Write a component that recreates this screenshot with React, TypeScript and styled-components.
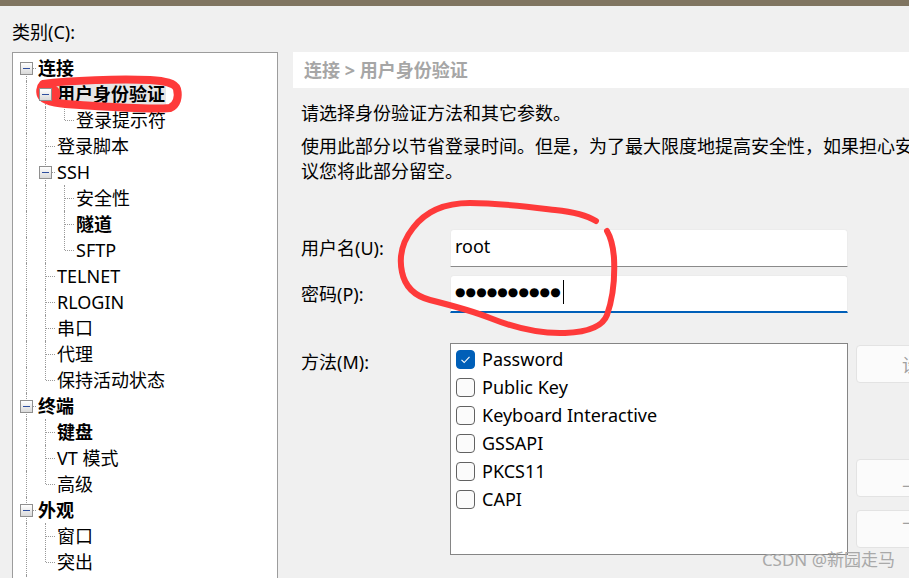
import React from 'react';
import styled, { createGlobalStyle } from 'styled-components';

const GlobalStyle = createGlobalStyle`
  html, body { margin: 0; padding: 0; background: #f0f0f0; overflow: hidden; }
  body { font-family: "Noto Sans", "Noto Sans CJK SC", sans-serif; }
`;

const Window = styled.div`
  position: relative;
  width: 909px;
  height: 578px;
  overflow: hidden;
  background: #f0f0f0;
  color: #000;
  font-family: "Noto Sans", "Noto Sans CJK SC", sans-serif;
  font-size: 18px;
`;

const TitleStrip = styled.div`
  height: 6px;
  background: #807561;
`;

const Body = styled.div`
  display: flex;
  align-items: flex-start;
  gap: 15px;
  padding: 13px 0 0 12px;
`;

const LeftPane = styled.div`
  width: 266px;
  flex: none;
  display: flex;
  flex-direction: column;
  gap: 7px;
`;

const CategoryLabel = styled.div`
  line-height: 26px;
  height: 26px;
`;

const TreeBox = styled.div`
  height: 560px;
  background: #fff;
  border: 1px solid #9c9c9c;
  padding: 2px 0 0 4px;
  display: flex;
  flex-direction: column;
`;

const TreeRow = styled.div`
  display: flex;
  align-items: stretch;
  height: 26px;
  flex: none;
`;

const GuideCell = styled.div<{ $line: boolean }>`
  position: relative;
  width: 19px;
  flex: none;
  &::before {
    content: "";
    display: ${p => (p.$line ? 'block' : 'none')};
    position: absolute;
    left: 9px;
    top: 0;
    bottom: 0;
    border-left: 1px dotted #9a9a9a;
  }
`;

const ConnectorCell = styled.div<{ $up: boolean; $down: boolean }>`
  position: relative;
  width: 19px;
  flex: none;
  &::before {
    content: "";
    position: absolute;
    left: 9px;
    top: ${p => (p.$up ? '0' : '13px')};
    bottom: ${p => (p.$down ? '0' : '13px')};
    border-left: 1px dotted #9a9a9a;
  }
  &::after {
    content: "";
    position: absolute;
    left: 10px;
    right: 0;
    top: 13px;
    border-top: 1px dotted #9a9a9a;
  }
`;

const Expander = styled.span`
  position: absolute;
  z-index: 1;
  left: 3px;
  top: 7px;
  width: 11px;
  height: 11px;
  border: 1px solid #8f8f8f;
  background: linear-gradient(#ffffff, #d9d9d9);
  display: flex;
  align-items: center;
  justify-content: center;
  &::after {
    content: "";
    width: 7px;
    height: 1px;
    background: #2f4f9e;
  }
`;

const NodeLabel = styled.span<{ $bold?: boolean; $selected?: boolean }>`
  margin-left: 1px;
  align-self: center;
  line-height: 22px;
  padding: 0 1px;
  white-space: nowrap;
  font-weight: ${p => (p.$bold ? 700 : 400)};
  background: ${p => (p.$selected ? '#e6e6e6' : 'transparent')};
`;

const RightPane = styled.div`
  width: 700px;
  flex: none;
  margin-top: 33px;
`;

const Breadcrumb = styled.div`
  height: 36px;
  line-height: 36px;
  background: #fff;
  padding-left: 11px;
  color: #a6a6a6;
  font-weight: 700;
  white-space: nowrap;
`;

const Content = styled.div`
  padding-left: 8px;
`;

const Para = styled.p<{ $gap: number }>`
  margin: ${p => p.$gap}px 0 0;
  line-height: 25px;
  white-space: nowrap;
`;

const Form = styled.div`
  margin-top: 45px;
  display: flex;
  flex-direction: column;
`;

const FormRow = styled.div<{ $gap: number; $align?: string }>`
  display: flex;
  align-items: ${p => p.$align || 'center'};
  margin-top: ${p => p.$gap}px;
`;

const FieldLabel = styled.div<{ $pad?: number }>`
  width: 149px;
  flex: none;
  line-height: 26px;
  padding-top: ${p => p.$pad || 0}px;
`;

const TextBox = styled.div<{ $focused?: boolean }>`
  width: 398px;
  height: 38px;
  box-sizing: border-box;
  background: #fff;
  border: 1px solid #ececec;
  border-bottom: ${p => (p.$focused ? '2px solid #005fb8' : '1px solid #8a8a8a')};
  border-radius: 4px 4px 0 0;
  padding: 0 0 4px 4px;
  display: flex;
  align-items: center;
  white-space: nowrap;
`;

const Dots = styled.span`
  font-family: "DejaVu Sans", sans-serif;
  font-size: 12px;
  letter-spacing: 0.1px;
`;

const Caret = styled.span`
  display: inline-block;
  width: 1px;
  height: 24px;
  background: #000;
  margin-left: 2px;
`;

const ListBox = styled.div`
  width: 398px;
  height: 212px;
  box-sizing: border-box;
  background: #fff;
  border: 1px solid #858585;
  padding: 1px 5px;
  display: flex;
  flex-direction: column;
`;

const CheckRow = styled.div`
  height: 28px;
  display: flex;
  align-items: center;
  gap: 7px;
`;

const CheckBox = styled.span<{ $checked?: boolean }>`
  width: 19px;
  height: 19px;
  box-sizing: border-box;
  border-radius: 4px;
  border: 1px solid ${p => (p.$checked ? '#005fb8' : '#626262')};
  background: ${p => (p.$checked ? '#005fb8' : '#fbfbfb')};
  display: flex;
  align-items: center;
  justify-content: center;
  flex: none;
`;

const ButtonColumn = styled.div`
  margin-left: 8px;
  padding-top: 2px;
  display: flex;
  flex-direction: column;
`;

const SideButton = styled.div<{ $gap: number }>`
  margin-top: ${p => p.$gap}px;
  width: 120px;
  height: 38px;
  box-sizing: border-box;
  border: 1px solid #e3e3e3;
  border-radius: 4px;
  background: #fbfbfb;
  color: #a0a0a0;
  padding-left: 45px;
  display: flex;
  align-items: center;
  white-space: nowrap;
`;

const Watermark = styled.div`
  position: absolute;
  right: 14px;
  top: 549px;
  font-size: 17px;
  line-height: 22px;
  color: #a9a9a9;
  white-space: nowrap;
`;

const Ink = styled.svg`
  position: absolute;
  left: 0;
  top: 0;
  pointer-events: none;
`;

type Node = { label: string; bold?: boolean; selected?: boolean; children?: Node[] };
type Row = {
  label: string;
  bold?: boolean;
  selected?: boolean;
  guides: boolean[];
  up: boolean;
  down: boolean;
  expander: boolean;
};

const tree: Node[] = [
  {
    label: '连接',
    bold: true,
    children: [
      { label: '用户身份验证', bold: true, selected: true, children: [{ label: '登录提示符' }] },
      { label: '登录脚本' },
      { label: 'SSH', children: [{ label: '安全性' }, { label: '隧道', bold: true }, { label: 'SFTP' }] },
      { label: 'TELNET' },
      { label: 'RLOGIN' },
      { label: '串口' },
      { label: '代理' },
      { label: '保持活动状态' },
    ],
  },
  { label: '终端', bold: true, children: [{ label: '键盘', bold: true }, { label: 'VT 模式' }, { label: '高级' }] },
  { label: '外观', bold: true, children: [{ label: '窗口' }, { label: '突出' }] },
  { label: '日志文件' },
  { label: '打印' },
];

function flatten(nodes: Node[], level: number, guides: boolean[], out: Row[]) {
  nodes.forEach((n, i) => {
    const isLast = i === nodes.length - 1;
    out.push({
      label: n.label,
      bold: n.bold,
      selected: n.selected,
      guides,
      up: !(level === 0 && i === 0),
      down: !isLast,
      expander: !!(n.children && n.children.length),
    });
    if (n.children) flatten(n.children, level + 1, [...guides, !isLast], out);
  });
}

const rows: Row[] = [];
flatten(tree, 0, [], rows);

const methods = [
  { label: 'Password', checked: true },
  { label: 'Public Key' },
  { label: 'Keyboard Interactive' },
  { label: 'GSSAPI' },
  { label: 'PKCS11' },
  { label: 'CAPI' },
];

export default function App() {
  return (
    <Window>
      <GlobalStyle />
      <TitleStrip />
      <Body>
        <LeftPane>
          <CategoryLabel>类别(C):</CategoryLabel>
          <TreeBox>
            {rows.map((r, idx) => (
              <TreeRow key={idx}>
                {r.guides.map((g, k) => (
                  <GuideCell key={k} $line={g} />
                ))}
                <ConnectorCell $up={r.up} $down={r.down}>
                  {r.expander && <Expander />}
                </ConnectorCell>
                <NodeLabel $bold={r.bold} $selected={r.selected}>
                  {r.label}
                </NodeLabel>
              </TreeRow>
            ))}
          </TreeBox>
        </LeftPane>
        <RightPane>
          <Breadcrumb>连接 &gt; 用户身份验证</Breadcrumb>
          <Content>
            <Para $gap={13}>请选择身份验证方法和其它参数。</Para>
            <Para $gap={8}>
              使用此部分以节省登录时间。但是，为了最大限度地提高安全性，如果担心安全问题，建
              <br />
              议您将此部分留空。
            </Para>
            <Form>
              <FormRow $gap={0}>
                <FieldLabel>用户名(U):</FieldLabel>
                <TextBox>root</TextBox>
              </FormRow>
              <FormRow $gap={8}>
                <FieldLabel>密码(P):</FieldLabel>
                <TextBox $focused>
                  <Dots>●●●●●●●●●●</Dots>
                  <Caret />
                </TextBox>
              </FormRow>
              <FormRow $gap={30} $align="flex-start">
                <FieldLabel $pad={6}>方法(M):</FieldLabel>
                <ListBox>
                  {methods.map(m => (
                    <CheckRow key={m.label}>
                      <CheckBox $checked={m.checked}>
                        {m.checked && (
                          <svg width="13" height="13" viewBox="0 0 13 13">
                            <polyline points="2.5,6.8 5.2,9.5 10.5,3.8" fill="none" stroke="#fff" strokeWidth="1.1" />
                          </svg>
                        )}
                      </CheckBox>
                      <span>{m.label}</span>
                    </CheckRow>
                  ))}
                </ListBox>
                <ButtonColumn>
                  <SideButton $gap={0}>设置(S)...</SideButton>
                  <SideButton $gap={76}>上移(U)</SideButton>
                  <SideButton $gap={13}>下移(D)</SideButton>
                </ButtonColumn>
              </FormRow>
            </Form>
          </Content>
        </RightPane>
      </Body>
      <Watermark>CSDN @新园走马</Watermark>
      <Ink width="909" height="578" viewBox="0 0 909 578">
        <g fill="none" stroke="#fe3a3a" strokeLinecap="round" strokeLinejoin="round">
          <path
            strokeWidth="8"
            d="M 43,84 C 70,80 120,79 150,80 C 165,81 175,83 177,89 C 179,97 177,105 170,108 C 150,110 110,107 80,105 C 60,104 46,102 42,97 C 39,93 40,87 43,84 Z"
          />
          <path strokeWidth="9" d="M 45,88 C 51,87 56,90 56,94 C 54,100 47,100 45,96" />
          <path
            strokeWidth="6"
            d="M 596,221 C 588,216 575,212 555,210 C 530,207 500,203 470,203 C 445,203 425,212 413,228 C 402,242 399,258 402,272 C 405,287 415,296 430,300 C 450,305 470,310 490,318 C 515,328 540,334 565,333 C 590,332 603,326 607,315 C 613,298 615,278 614,258 C 613,245 610,236 607,231"
          />
        </g>
      </Ink>
    </Window>
  );
}
